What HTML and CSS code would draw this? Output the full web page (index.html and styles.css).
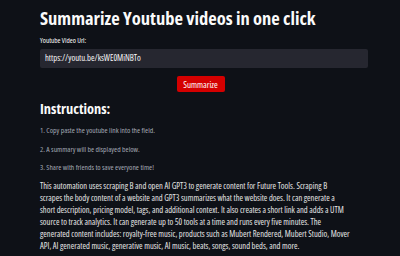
FILE: index.html
```html
<!DOCTYPE html>
<html lang="en">

<head>
  <meta charset="UTF-8">
  <meta name="viewport" content="width=device-width, initial-scale=1.0">
  <title>Youtube Summarizer</title>
  <link rel="stylesheet" href="styles.css">
</head>

<body>
  <div class="main">
    <h1>Summarize Youtube videos in one click</h1>

    <label class="field-label" for="url">Youtube Video Url:</label>
    <div class="field" id="url">https://youtu.be/ksWE0MiNBTo</div>

    <div class="actions">
      <button class="btn">Summarize</button>
    </div>

    <h2>Instructions:</h2>
    <p class="step">1. Copy paste the youtube link into the field.</p>
    <p class="step">2. A summary will be displayed below.</p>
    <p class="step">3. Share with friends to save everyone time!</p>

    <p class="about">This automation uses scraping B and open AI GPT3 to generate content for Future Tools. Scraping B<br>
      scrapes the body content of a website and GPT3 summarizes what the website does. It can generate a<br>
      short description, pricing model, tags, and additional context. It also creates a short link and adds a UTM<br>
      source to track analytics. It can generate up to 50 tools at a time and runs every five minutes. The<br>
      generated content includes: royalty-free music, products such as Mubert Rendered, Mubert Studio, Mover<br>
      API, AI generated music, generative music, AI music, beats, songs, sound beds, and more.</p>
  </div>
</body>

</html>
```

FILE: styles.css
```css
html,
body {
  margin: 0;
  background-color: #0e1117;
  color: #fafafa;
  font-family: "Open Sans", sans-serif;
  font-stretch: 75%;
  height: 100%;
  overflow: hidden;
}

.main {
  width: 328px;
  margin-left: 40px;
  padding-top: 6px;
}

h1 {
  margin: 0;
  font-size: 18.5px;
  font-weight: 700;
  line-height: 24px;
}

.field-label {
  display: block;
  margin-top: 6px;
  font-size: 7.2px;
  line-height: 9px;
}

.field {
  margin-top: 4px;
  height: 19px;
  line-height: 19px;
  padding: 0 5px;
  background-color: #262730;
  border-radius: 2px;
  font-size: 8.6px;
}

.actions {
  display: flex;
  justify-content: center;
  margin-top: 8px;
  padding-right: 7px;
}

.btn {
  width: 48px;
  height: 16px;
  padding: 0;
  border: none;
  border-radius: 2px;
  background-color: #d40000;
  color: #fff;
  font-family: inherit;
  font-stretch: inherit;
  font-size: 9px;
}

h2 {
  margin: 8px 0 0;
  font-size: 14.4px;
  font-weight: 700;
  line-height: 18px;
}

.step {
  margin: 7px 0 0;
  font-size: 7.6px;
  line-height: 11.5px;
  color: #a3a8b4;
}

.about {
  width: 340px;
  margin: 6px 0 0;
  font-size: 8.5px;
  line-height: 12px;
  color: #e6e6e6;
}
```
